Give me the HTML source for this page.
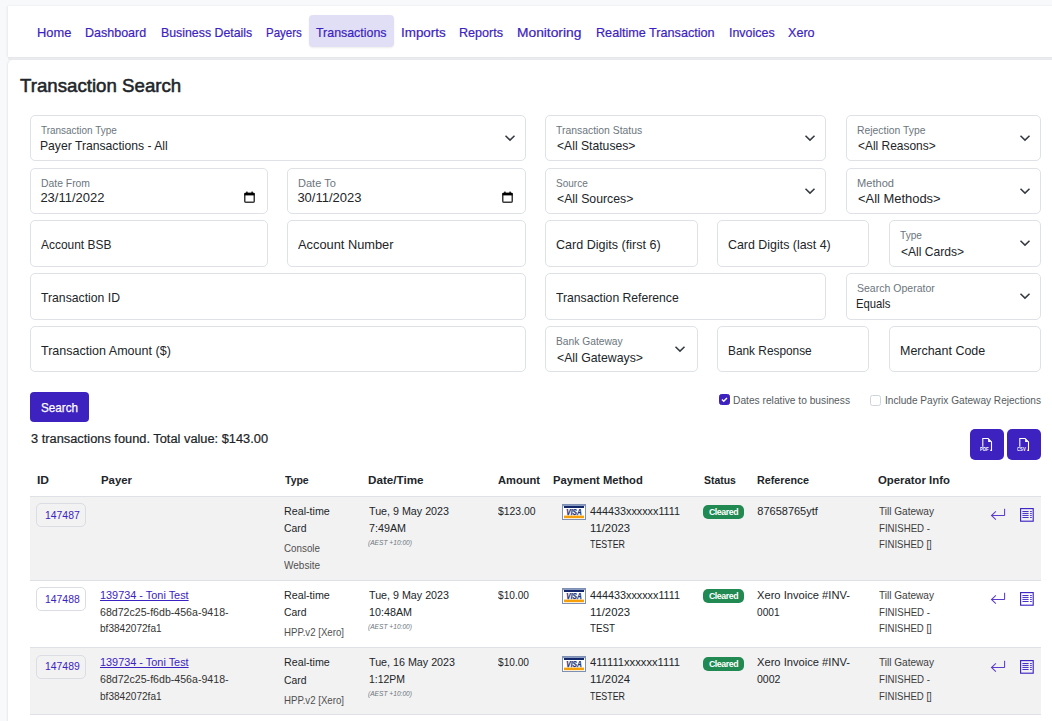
<!DOCTYPE html>
<html><head><meta charset="utf-8">
<style>
html,body{margin:0;padding:0;}
body{width:1052px;height:721px;overflow:hidden;background:#f8f9fb;position:relative;font-family:"Liberation Sans",sans-serif;}
.t{position:absolute;white-space:nowrap;line-height:1;transform-origin:0 0;}
.abs{position:absolute;}
.card{position:absolute;background:#fff;}
.inp{position:absolute;box-sizing:border-box;border:1px solid #dee2e6;border-radius:5px;background:#fff;}
.chev{position:absolute;}
.btn{position:absolute;background:#3d22c0;border-radius:4px;}
.ex{border-radius:5px;}
.cb{position:absolute;box-sizing:border-box;width:11px;height:11px;border:1px solid #ced4da;border-radius:2.5px;background:#fff;}
.cb.on{background:#3d22c0;border-color:#3d22c0;}
.cb svg{position:absolute;left:-1px;top:-1px;}
.rule{position:absolute;}
.row{position:absolute;left:30px;width:1011px;}
.idb{position:absolute;box-sizing:border-box;border:1px solid #dadde4;border-radius:5px;}
.clr{position:absolute;width:41px;height:14px;border-radius:5px;background:#208a52;color:#fff;font-size:8.8px;font-weight:700;line-height:14px;text-align:center;letter-spacing:-0.45px;}
</style></head><body>
<div class="card" style="left:8px;top:6px;width:1060px;height:51px;box-shadow:-1px 0 2px rgba(20,30,60,0.07);"></div>
<div class="abs" style="left:8px;top:57px;width:1060px;height:3px;background:linear-gradient(#e6e7ea,#eeeff1);"></div>
<div class="abs" style="left:309px;top:15px;width:85px;height:32px;background:#e0dff6;border-radius:4px;box-shadow:0 1px 2px rgba(0,0,0,0.08);"></div>
<div class="card" style="left:8px;top:60px;width:1060px;height:700px;border-radius:5px 0 0 0;box-shadow:-1px 0 2px rgba(20,30,60,0.07);"></div>
<div class="inp" style="left:30px;top:115px;width:496px;height:46px"></div>
<svg class="chev" style="left:503.5px;top:133px" width="12" height="10" viewBox="0 0 12 10"><path d="M1.5 2.7 L6 7.1 L10.5 2.7" fill="none" stroke="#343a40" stroke-width="1.5"/></svg>
<div class="inp" style="left:545px;top:115px;width:281px;height:46px"></div>
<svg class="chev" style="left:803.5px;top:133px" width="12" height="10" viewBox="0 0 12 10"><path d="M1.5 2.7 L6 7.1 L10.5 2.7" fill="none" stroke="#343a40" stroke-width="1.5"/></svg>
<div class="inp" style="left:846px;top:115px;width:195px;height:46px"></div>
<svg class="chev" style="left:1018.6px;top:133px" width="12" height="10" viewBox="0 0 12 10"><path d="M1.5 2.7 L6 7.1 L10.5 2.7" fill="none" stroke="#343a40" stroke-width="1.5"/></svg>
<div class="inp" style="left:30px;top:168px;width:238px;height:46px"></div>
<svg class="chev" style="left:244.2px;top:191.0px" width="11" height="12" viewBox="0 0 11 12"><rect x="0.75" y="2.2" width="9.5" height="9" rx="1" fill="none" stroke="#3a3a3a" stroke-width="1.5"/><rect x="0.5" y="2" width="10" height="2.4" fill="#000"/><rect x="2.2" y="0.6" width="1.4" height="2" fill="#000"/><rect x="7.4" y="0.6" width="1.4" height="2" fill="#000"/></svg>
<div class="inp" style="left:287px;top:168px;width:239px;height:46px"></div>
<svg class="chev" style="left:502.2px;top:191.0px" width="11" height="12" viewBox="0 0 11 12"><rect x="0.75" y="2.2" width="9.5" height="9" rx="1" fill="none" stroke="#3a3a3a" stroke-width="1.5"/><rect x="0.5" y="2" width="10" height="2.4" fill="#000"/><rect x="2.2" y="0.6" width="1.4" height="2" fill="#000"/><rect x="7.4" y="0.6" width="1.4" height="2" fill="#000"/></svg>
<div class="inp" style="left:545px;top:168px;width:281px;height:46px"></div>
<svg class="chev" style="left:803.5px;top:186px" width="12" height="10" viewBox="0 0 12 10"><path d="M1.5 2.7 L6 7.1 L10.5 2.7" fill="none" stroke="#343a40" stroke-width="1.5"/></svg>
<div class="inp" style="left:846px;top:168px;width:195px;height:46px"></div>
<svg class="chev" style="left:1018.6px;top:186px" width="12" height="10" viewBox="0 0 12 10"><path d="M1.5 2.7 L6 7.1 L10.5 2.7" fill="none" stroke="#343a40" stroke-width="1.5"/></svg>
<div class="inp" style="left:30px;top:220px;width:238px;height:47px"></div>
<div class="inp" style="left:287px;top:220px;width:239px;height:47px"></div>
<div class="inp" style="left:545px;top:220px;width:153px;height:47px"></div>
<div class="inp" style="left:717px;top:220px;width:152px;height:47px"></div>
<div class="inp" style="left:889px;top:220px;width:152px;height:47px"></div>
<svg class="chev" style="left:1018.6px;top:238px" width="12" height="10" viewBox="0 0 12 10"><path d="M1.5 2.7 L6 7.1 L10.5 2.7" fill="none" stroke="#343a40" stroke-width="1.5"/></svg>
<div class="inp" style="left:30px;top:273px;width:496px;height:47px"></div>
<div class="inp" style="left:545px;top:273px;width:281px;height:47px"></div>
<div class="inp" style="left:846px;top:273px;width:195px;height:47px"></div>
<svg class="chev" style="left:1018.6px;top:291px" width="12" height="10" viewBox="0 0 12 10"><path d="M1.5 2.7 L6 7.1 L10.5 2.7" fill="none" stroke="#343a40" stroke-width="1.5"/></svg>
<div class="inp" style="left:30px;top:326px;width:496px;height:46px"></div>
<div class="inp" style="left:545px;top:326px;width:153px;height:46px"></div>
<svg class="chev" style="left:674.2px;top:344px" width="12" height="10" viewBox="0 0 12 10"><path d="M1.5 2.7 L6 7.1 L10.5 2.7" fill="none" stroke="#343a40" stroke-width="1.5"/></svg>
<div class="inp" style="left:717px;top:326px;width:152px;height:46px"></div>
<div class="inp" style="left:889px;top:326px;width:152px;height:46px"></div>
<div class="btn" style="left:30px;top:392px;width:59px;height:30px"></div>
<div class="cb on" style="left:719px;top:394px"><svg width="11" height="11" viewBox="0 0 11 11"><path d="M3 5.6 L4.7 7.3 L8 3.9" fill="none" stroke="#fff" stroke-width="1.4"/></svg></div>
<div class="cb" style="left:870px;top:395px"></div>
<div class="btn ex" style="left:970px;top:429px;width:34px;height:31px"><svg class="abs" style="left:10px;top:8px" width="14" height="15" viewBox="0 0 14 15"><path d="M2.8 9.8 V1.5 H8.1 L11.5 4.9 V13.4 H10.3" fill="none" stroke="#fff" stroke-width="1.1"/><path d="M8.1 1.5 L11.5 4.9 H8.1 Z" fill="#fff"/><text x="0.1" y="13.9" font-size="5.6" font-weight="700" fill="#fff" font-family="Liberation Sans" textLength="8.6" lengthAdjust="spacingAndGlyphs">PDF</text></svg></div>
<div class="btn ex" style="left:1007px;top:429px;width:34px;height:31px"><svg class="abs" style="left:10px;top:8px" width="14" height="15" viewBox="0 0 14 15"><path d="M2.8 9.8 V1.5 H8.1 L11.5 4.9 V13.4 H10.3" fill="none" stroke="#fff" stroke-width="1.1"/><path d="M8.1 1.5 L11.5 4.9 H8.1 Z" fill="#fff"/><text x="0.1" y="13.9" font-size="5.6" font-weight="700" fill="#fff" font-family="Liberation Sans" textLength="8.6" lengthAdjust="spacingAndGlyphs">CSV</text></svg></div>
<div class="rule" style="left:30px;top:495.5px;width:1011px;height:1.5px;background:#dee2e6"></div>
<div class="row" style="top:497px;height:83px;background:#f2f2f2"></div>
<div class="rule" style="left:30px;top:580px;width:1011px;height:1px;background:#dee2e6"></div>
<div class="row" style="top:581px;height:66px;background:#ffffff"></div>
<div class="rule" style="left:30px;top:647px;width:1011px;height:1px;background:#dee2e6"></div>
<div class="row" style="top:648px;height:66px;background:#f2f2f2"></div>
<div class="rule" style="left:30px;top:714px;width:1011px;height:1px;background:#dee2e6"></div>
<div class="idb" style="left:36px;top:503.4px;width:50px;height:24px;background:transparent"></div>
<svg class="abs" style="left:562px;top:504px" width="24" height="16" viewBox="0 0 24 16"><rect x="0.5" y="0.5" width="23" height="15" fill="#fff" stroke="#7d8fb3" stroke-width="1"/><rect x="1" y="1" width="22" height="1.2" fill="#8c9cc0"/><rect x="2" y="2" width="20" height="2" fill="#13286b"/><text x="4.3" y="10.9" font-size="8.2" font-weight="700" font-style="italic" fill="#1d3378" font-family="Liberation Sans" textLength="15.4" lengthAdjust="spacingAndGlyphs" stroke="#1d3378" stroke-width="0.25">VISA</text><rect x="2" y="11.6" width="20" height="2.6" fill="#f5a00a"/></svg>
<div class="clr" style="left:703px;top:505.0px">Cleared</div>
<svg class="abs" style="left:990px;top:508px" width="16" height="14" viewBox="0 0 16 14"><path d="M14.6 0.8 V7 Q14.6 7.5 14.1 7.5 H1.6" fill="none" stroke="#5b3ccc" stroke-width="1.05"/><path d="M5.9 3.4 L1.5 7.5 L5.9 11.7" fill="none" stroke="#5b3ccc" stroke-width="1.05"/></svg><svg class="abs" style="left:1019px;top:507px" width="16" height="16" viewBox="0 0 16 16"><rect x="1.6" y="1.6" width="12.6" height="12.6" fill="none" stroke="#3d25c4" stroke-width="1.15"/><path d="M3.4 4.5 H9.6 M3.4 6.45 H9.6 M3.4 8.45 H9.6 M3.4 10.5 H9.6 M11.1 4.5 H12.8 M11.1 6.45 H12.8 M11.1 8.45 H12.8 M11.1 10.5 H12.8" stroke="#3d25c4" stroke-width="0.95"/></svg>
<div class="idb" style="left:36px;top:587.4px;width:50px;height:24px;background:transparent"></div>
<svg class="abs" style="left:562px;top:588px" width="24" height="16" viewBox="0 0 24 16"><rect x="0.5" y="0.5" width="23" height="15" fill="#fff" stroke="#7d8fb3" stroke-width="1"/><rect x="1" y="1" width="22" height="1.2" fill="#8c9cc0"/><rect x="2" y="2" width="20" height="2" fill="#13286b"/><text x="4.3" y="10.9" font-size="8.2" font-weight="700" font-style="italic" fill="#1d3378" font-family="Liberation Sans" textLength="15.4" lengthAdjust="spacingAndGlyphs" stroke="#1d3378" stroke-width="0.25">VISA</text><rect x="2" y="11.6" width="20" height="2.6" fill="#f5a00a"/></svg>
<div class="clr" style="left:703px;top:589.0px">Cleared</div>
<svg class="abs" style="left:990px;top:592px" width="16" height="14" viewBox="0 0 16 14"><path d="M14.6 0.8 V7 Q14.6 7.5 14.1 7.5 H1.6" fill="none" stroke="#5b3ccc" stroke-width="1.05"/><path d="M5.9 3.4 L1.5 7.5 L5.9 11.7" fill="none" stroke="#5b3ccc" stroke-width="1.05"/></svg><svg class="abs" style="left:1019px;top:591px" width="16" height="16" viewBox="0 0 16 16"><rect x="1.6" y="1.6" width="12.6" height="12.6" fill="none" stroke="#3d25c4" stroke-width="1.15"/><path d="M3.4 4.5 H9.6 M3.4 6.45 H9.6 M3.4 8.45 H9.6 M3.4 10.5 H9.6 M11.1 4.5 H12.8 M11.1 6.45 H12.8 M11.1 8.45 H12.8 M11.1 10.5 H12.8" stroke="#3d25c4" stroke-width="0.95"/></svg>
<div class="idb" style="left:36px;top:654.9px;width:50px;height:24px;background:transparent"></div>
<svg class="abs" style="left:562px;top:655.5px" width="24" height="16" viewBox="0 0 24 16"><rect x="0.5" y="0.5" width="23" height="15" fill="#fff" stroke="#7d8fb3" stroke-width="1"/><rect x="1" y="1" width="22" height="1.2" fill="#8c9cc0"/><rect x="2" y="2" width="20" height="2" fill="#13286b"/><text x="4.3" y="10.9" font-size="8.2" font-weight="700" font-style="italic" fill="#1d3378" font-family="Liberation Sans" textLength="15.4" lengthAdjust="spacingAndGlyphs" stroke="#1d3378" stroke-width="0.25">VISA</text><rect x="2" y="11.6" width="20" height="2.6" fill="#f5a00a"/></svg>
<div class="clr" style="left:703px;top:656.5px">Cleared</div>
<svg class="abs" style="left:990px;top:659.5px" width="16" height="14" viewBox="0 0 16 14"><path d="M14.6 0.8 V7 Q14.6 7.5 14.1 7.5 H1.6" fill="none" stroke="#5b3ccc" stroke-width="1.05"/><path d="M5.9 3.4 L1.5 7.5 L5.9 11.7" fill="none" stroke="#5b3ccc" stroke-width="1.05"/></svg><svg class="abs" style="left:1019px;top:658.5px" width="16" height="16" viewBox="0 0 16 16"><rect x="1.6" y="1.6" width="12.6" height="12.6" fill="none" stroke="#3d25c4" stroke-width="1.15"/><path d="M3.4 4.5 H9.6 M3.4 6.45 H9.6 M3.4 8.45 H9.6 M3.4 10.5 H9.6 M11.1 4.5 H12.8 M11.1 6.45 H12.8 M11.1 8.45 H12.8 M11.1 10.5 H12.8" stroke="#3d25c4" stroke-width="0.95"/></svg>
<div class="t" style="left:37.30px;top:26.00px;font-size:13px;color:#3b22c2;transform:scaleX(0.9891);-webkit-text-stroke:0.2px #3b22c2;">Home</div>
<div class="t" style="left:85.20px;top:26.00px;font-size:13px;color:#3b22c2;transform:scaleX(0.9623);-webkit-text-stroke:0.2px #3b22c2;">Dashboard</div>
<div class="t" style="left:160.60px;top:26.00px;font-size:13px;color:#3b22c2;transform:scaleX(0.9490);-webkit-text-stroke:0.2px #3b22c2;">Business Details</div>
<div class="t" style="left:266.20px;top:26.00px;font-size:13px;color:#3b22c2;transform:scaleX(0.8848);-webkit-text-stroke:0.2px #3b22c2;">Payers</div>
<div class="t" style="left:316.30px;top:26.00px;font-size:13px;color:#3b22c2;transform:scaleX(0.9535);-webkit-text-stroke:0.2px #3b22c2;">Transactions</div>
<div class="t" style="left:400.70px;top:26.00px;font-size:13px;color:#3b22c2;transform:scaleX(1.0313);-webkit-text-stroke:0.2px #3b22c2;">Imports</div>
<div class="t" style="left:459.30px;top:26.00px;font-size:13px;color:#3b22c2;transform:scaleX(0.9688);-webkit-text-stroke:0.2px #3b22c2;">Reports</div>
<div class="t" style="left:517.00px;top:26.00px;font-size:13px;color:#3b22c2;transform:scaleX(1.0594);-webkit-text-stroke:0.2px #3b22c2;">Monitoring</div>
<div class="t" style="left:595.70px;top:26.00px;font-size:13px;color:#3b22c2;transform:scaleX(0.9710);-webkit-text-stroke:0.2px #3b22c2;">Realtime Transaction</div>
<div class="t" style="left:728.80px;top:26.00px;font-size:13px;color:#3b22c2;transform:scaleX(0.9562);-webkit-text-stroke:0.2px #3b22c2;">Invoices</div>
<div class="t" style="left:787.70px;top:26.00px;font-size:13px;color:#3b22c2;transform:scaleX(0.9687);-webkit-text-stroke:0.2px #3b22c2;">Xero</div>
<div class="t" style="left:20.40px;top:76.00px;font-size:19px;color:#212529;transform:scaleX(0.9827);-webkit-text-stroke:0.55px #212529;">Transaction Search</div>
<div class="t" style="left:40.60px;top:125.00px;font-size:11.4px;color:#6c757d;transform:scaleX(0.8741);">Transaction Type</div>
<div class="t" style="left:40.40px;top:139.00px;font-size:13px;color:#212529;transform:scaleX(0.9352);">Payer Transactions - All</div>
<div class="t" style="left:555.60px;top:125.00px;font-size:11.4px;color:#6c757d;transform:scaleX(0.9117);">Transaction Status</div>
<div class="t" style="left:557.20px;top:139.00px;font-size:13px;color:#212529;transform:scaleX(0.9353);">&lt;All Statuses&gt;</div>
<div class="t" style="left:856.60px;top:125.00px;font-size:11.4px;color:#6c757d;transform:scaleX(0.9105);">Rejection Type</div>
<div class="t" style="left:858.20px;top:139.00px;font-size:13px;color:#212529;transform:scaleX(0.9190);">&lt;All Reasons&gt;</div>
<div class="t" style="left:40.60px;top:178.00px;font-size:11.4px;color:#6c757d;transform:scaleX(0.9108);">Date From</div>
<div class="t" style="left:40.40px;top:191.00px;font-size:13px;color:#212529;">23/11/2022</div>
<div class="t" style="left:297.60px;top:178.00px;font-size:11.4px;color:#6c757d;transform:scaleX(0.9680);">Date To</div>
<div class="t" style="left:297.40px;top:191.00px;font-size:13px;color:#212529;">30/11/2023</div>
<div class="t" style="left:555.60px;top:178.00px;font-size:11.4px;color:#6c757d;transform:scaleX(0.8783);">Source</div>
<div class="t" style="left:557.20px;top:192.00px;font-size:13px;color:#212529;transform:scaleX(0.9428);">&lt;All Sources&gt;</div>
<div class="t" style="left:856.60px;top:178.00px;font-size:11.4px;color:#6c757d;transform:scaleX(0.9739);">Method</div>
<div class="t" style="left:858.20px;top:192.00px;font-size:13px;color:#212529;transform:scaleX(0.9939);">&lt;All Methods&gt;</div>
<div class="t" style="left:40.60px;top:238.00px;font-size:13px;color:#212529;transform:scaleX(0.9191);">Account BSB</div>
<div class="t" style="left:297.60px;top:238.00px;font-size:13px;color:#212529;transform:scaleX(0.9864);">Account Number</div>
<div class="t" style="left:555.60px;top:238.00px;font-size:13px;color:#212529;transform:scaleX(0.9663);">Card Digits (first 6)</div>
<div class="t" style="left:727.60px;top:238.00px;font-size:13px;color:#212529;transform:scaleX(0.9541);">Card Digits (last 4)</div>
<div class="t" style="left:899.60px;top:230.00px;font-size:11.4px;color:#6c757d;transform:scaleX(0.8909);">Type</div>
<div class="t" style="left:901.20px;top:245.00px;font-size:13px;color:#212529;transform:scaleX(0.9290);">&lt;All Cards&gt;</div>
<div class="t" style="left:40.60px;top:291.00px;font-size:13px;color:#212529;transform:scaleX(0.9399);">Transaction ID</div>
<div class="t" style="left:555.60px;top:291.00px;font-size:13px;color:#212529;transform:scaleX(0.9364);">Transaction Reference</div>
<div class="t" style="left:856.60px;top:283.00px;font-size:11.4px;color:#6c757d;transform:scaleX(0.9239);">Search Operator</div>
<div class="t" style="left:856.40px;top:297.00px;font-size:13px;color:#212529;transform:scaleX(0.8679);">Equals</div>
<div class="t" style="left:40.60px;top:344.00px;font-size:13px;color:#212529;transform:scaleX(0.9642);">Transaction Amount ($)</div>
<div class="t" style="left:555.60px;top:336.00px;font-size:11.4px;color:#6c757d;transform:scaleX(0.9004);">Bank Gateway</div>
<div class="t" style="left:557.20px;top:351.00px;font-size:13px;color:#212529;transform:scaleX(0.9446);">&lt;All Gateways&gt;</div>
<div class="t" style="left:727.60px;top:344.00px;font-size:13px;color:#212529;transform:scaleX(0.9120);">Bank Response</div>
<div class="t" style="left:899.60px;top:344.00px;font-size:13px;color:#212529;transform:scaleX(0.9586);">Merchant Code</div>
<div class="t" style="left:40.90px;top:402.00px;font-size:12.6px;color:#ffffff;transform:scaleX(0.9298);-webkit-text-stroke:0.25px #fff;">Search</div>
<div class="t" style="left:733.10px;top:395.00px;font-size:11.2px;color:#555b61;transform:scaleX(0.9134);">Dates relative to business</div>
<div class="t" style="left:884.60px;top:395.00px;font-size:11.2px;color:#555b61;transform:scaleX(0.9024);">Include Payrix Gateway Rejections</div>
<div class="t" style="left:30.70px;top:433.00px;font-size:12px;color:#212529;transform:scaleX(1.0682);-webkit-text-stroke:0.2px #212529;">3 transactions found. Total value: $143.00</div>
<div class="t" style="left:36.60px;top:474.00px;font-size:11.6px;color:#212529;font-weight:700;transform:scaleX(1.0350);">ID</div>
<div class="t" style="left:100.60px;top:474.00px;font-size:11.6px;color:#212529;font-weight:700;transform:scaleX(0.9814);">Payer</div>
<div class="t" style="left:284.80px;top:474.00px;font-size:11.6px;color:#212529;font-weight:700;transform:scaleX(0.9046);">Type</div>
<div class="t" style="left:368.40px;top:474.00px;font-size:11.6px;color:#212529;font-weight:700;transform:scaleX(1.0072);">Date/Time</div>
<div class="t" style="left:497.50px;top:474.00px;font-size:11.6px;color:#212529;font-weight:700;transform:scaleX(0.9592);">Amount</div>
<div class="t" style="left:553.20px;top:474.00px;font-size:11.6px;color:#212529;font-weight:700;transform:scaleX(0.9681);">Payment Method</div>
<div class="t" style="left:703.70px;top:474.00px;font-size:11.6px;color:#212529;font-weight:700;transform:scaleX(0.9003);">Status</div>
<div class="t" style="left:756.80px;top:474.00px;font-size:11.6px;color:#212529;font-weight:700;transform:scaleX(0.9257);">Reference</div>
<div class="t" style="left:878.10px;top:474.00px;font-size:11.6px;color:#212529;font-weight:700;transform:scaleX(0.9792);">Operator Info</div>
<div class="t" style="left:44.60px;top:510.00px;font-size:11px;color:#3b22c2;transform:scaleX(0.9453);">147487</div>
<div class="t" style="left:284.40px;top:506.00px;font-size:11px;color:#212529;transform:scaleX(0.9731);">Real-time</div>
<div class="t" style="left:284.40px;top:523.00px;font-size:11px;color:#212529;transform:scaleX(0.9437);">Card</div>
<div class="t" style="left:284.40px;top:543.00px;font-size:11px;color:#3d3d3d;transform:scaleX(0.8920);opacity:0.9;">Console</div>
<div class="t" style="left:284.40px;top:560.00px;font-size:11px;color:#3d3d3d;transform:scaleX(0.9105);opacity:0.9;">Website</div>
<div class="t" style="left:368.50px;top:506.00px;font-size:11px;color:#212529;transform:scaleX(0.9739);">Tue, 9 May 2023</div>
<div class="t" style="left:368.50px;top:523.00px;font-size:11px;color:#212529;transform:scaleX(0.9760);">7:49AM</div>
<div class="t" style="left:368.20px;top:540.00px;font-size:6.6px;color:#6c757d;font-style:italic;transform:scaleX(1.0047);">(AEST +10:00)</div>
<div class="t" style="left:498.00px;top:506.00px;font-size:11px;color:#212529;transform:scaleX(0.9456);">$123.00</div>
<div class="t" style="left:589.80px;top:506.00px;font-size:11px;color:#212529;transform:scaleX(0.9812);">444433xxxxxx1111</div>
<div class="t" style="left:589.80px;top:523.00px;font-size:11px;color:#212529;transform:scaleX(1.0271);">11/2023</div>
<div class="t" style="left:589.80px;top:539.00px;font-size:11px;color:#212529;transform:scaleX(0.8066);">TESTER</div>
<div class="t" style="left:757.30px;top:506.00px;font-size:11px;color:#212529;">87658765ytf</div>
<div class="t" style="left:878.60px;top:506.00px;font-size:11px;color:#3d3d3d;transform:scaleX(0.9150);">Till Gateway</div>
<div class="t" style="left:878.60px;top:523.00px;font-size:11px;color:#3d3d3d;transform:scaleX(0.8785);">FINISHED -</div>
<div class="t" style="left:878.60px;top:539.00px;font-size:11px;color:#3d3d3d;transform:scaleX(0.8710);">FINISHED []</div>
<div class="t" style="left:44.60px;top:594.00px;font-size:11px;color:#3b22c2;transform:scaleX(0.9453);">147488</div>
<div class="t" style="left:100.40px;top:590.00px;font-size:11px;color:#3b22c2;transform:scaleX(0.9901);text-decoration:underline;text-underline-offset:1px;">139734 - Toni Test</div>
<div class="t" style="left:100.40px;top:607.00px;font-size:11px;color:#333;transform:scaleX(0.9645);">68d72c25-f6db-456a-9418-</div>
<div class="t" style="left:100.40px;top:623.00px;font-size:11px;color:#333;transform:scaleX(0.9155);">bf3842072fa1</div>
<div class="t" style="left:284.40px;top:590.00px;font-size:11px;color:#212529;transform:scaleX(0.9731);">Real-time</div>
<div class="t" style="left:284.40px;top:607.00px;font-size:11px;color:#212529;transform:scaleX(0.9437);">Card</div>
<div class="t" style="left:284.40px;top:627.00px;font-size:11px;color:#3d3d3d;transform:scaleX(0.8788);opacity:0.9;">HPP.v2 [Xero]</div>
<div class="t" style="left:368.50px;top:590.00px;font-size:11px;color:#212529;transform:scaleX(0.9739);">Tue, 9 May 2023</div>
<div class="t" style="left:368.50px;top:607.00px;font-size:11px;color:#212529;transform:scaleX(0.9767);">10:48AM</div>
<div class="t" style="left:368.20px;top:624.00px;font-size:6.6px;color:#6c757d;font-style:italic;transform:scaleX(1.0047);">(AEST +10:00)</div>
<div class="t" style="left:498.00px;top:590.00px;font-size:11px;color:#212529;transform:scaleX(0.9214);">$10.00</div>
<div class="t" style="left:589.80px;top:590.00px;font-size:11px;color:#212529;transform:scaleX(0.9812);">444433xxxxxx1111</div>
<div class="t" style="left:589.80px;top:607.00px;font-size:11px;color:#212529;transform:scaleX(1.0271);">11/2023</div>
<div class="t" style="left:589.80px;top:623.00px;font-size:11px;color:#212529;transform:scaleX(0.8893);">TEST</div>
<div class="t" style="left:757.30px;top:590.00px;font-size:11px;color:#212529;transform:scaleX(1.0141);">Xero Invoice #INV-</div>
<div class="t" style="left:757.30px;top:607.00px;font-size:11px;color:#212529;transform:scaleX(0.9195);">0001</div>
<div class="t" style="left:878.60px;top:590.00px;font-size:11px;color:#3d3d3d;transform:scaleX(0.9150);">Till Gateway</div>
<div class="t" style="left:878.60px;top:607.00px;font-size:11px;color:#3d3d3d;transform:scaleX(0.8785);">FINISHED -</div>
<div class="t" style="left:878.60px;top:623.00px;font-size:11px;color:#3d3d3d;transform:scaleX(0.8710);">FINISHED []</div>
<div class="t" style="left:44.60px;top:661.00px;font-size:11px;color:#3b22c2;transform:scaleX(0.9453);">147489</div>
<div class="t" style="left:100.40px;top:657.00px;font-size:11px;color:#3b22c2;transform:scaleX(0.9901);text-decoration:underline;text-underline-offset:1px;">139734 - Toni Test</div>
<div class="t" style="left:100.40px;top:674.00px;font-size:11px;color:#333;transform:scaleX(0.9645);">68d72c25-f6db-456a-9418-</div>
<div class="t" style="left:100.40px;top:691.00px;font-size:11px;color:#333;transform:scaleX(0.9155);">bf3842072fa1</div>
<div class="t" style="left:284.40px;top:657.00px;font-size:11px;color:#212529;transform:scaleX(0.9731);">Real-time</div>
<div class="t" style="left:284.40px;top:675.00px;font-size:11px;color:#212529;transform:scaleX(0.9437);">Card</div>
<div class="t" style="left:284.40px;top:695.00px;font-size:11px;color:#3d3d3d;transform:scaleX(0.8788);opacity:0.9;">HPP.v2 [Xero]</div>
<div class="t" style="left:368.50px;top:657.00px;font-size:11px;color:#212529;transform:scaleX(0.9744);">Tue, 16 May 2023</div>
<div class="t" style="left:368.50px;top:674.00px;font-size:11px;color:#212529;transform:scaleX(0.9496);">1:12PM</div>
<div class="t" style="left:368.20px;top:691.00px;font-size:6.6px;color:#6c757d;font-style:italic;transform:scaleX(1.0047);">(AEST +10:00)</div>
<div class="t" style="left:498.00px;top:657.00px;font-size:11px;color:#212529;transform:scaleX(0.9214);">$10.00</div>
<div class="t" style="left:589.80px;top:657.00px;font-size:11px;color:#212529;transform:scaleX(1.0174);">411111xxxxxx1111</div>
<div class="t" style="left:589.80px;top:674.00px;font-size:11px;color:#212529;transform:scaleX(1.0271);">11/2024</div>
<div class="t" style="left:589.80px;top:691.00px;font-size:11px;color:#212529;transform:scaleX(0.8066);">TESTER</div>
<div class="t" style="left:757.30px;top:657.00px;font-size:11px;color:#212529;transform:scaleX(1.0141);">Xero Invoice #INV-</div>
<div class="t" style="left:757.30px;top:674.00px;font-size:11px;color:#212529;transform:scaleX(0.9603);">0002</div>
<div class="t" style="left:878.60px;top:657.00px;font-size:11px;color:#3d3d3d;transform:scaleX(0.9150);">Till Gateway</div>
<div class="t" style="left:878.60px;top:674.00px;font-size:11px;color:#3d3d3d;transform:scaleX(0.8785);">FINISHED -</div>
<div class="t" style="left:878.60px;top:691.00px;font-size:11px;color:#3d3d3d;transform:scaleX(0.8710);">FINISHED []</div>
</body></html>
